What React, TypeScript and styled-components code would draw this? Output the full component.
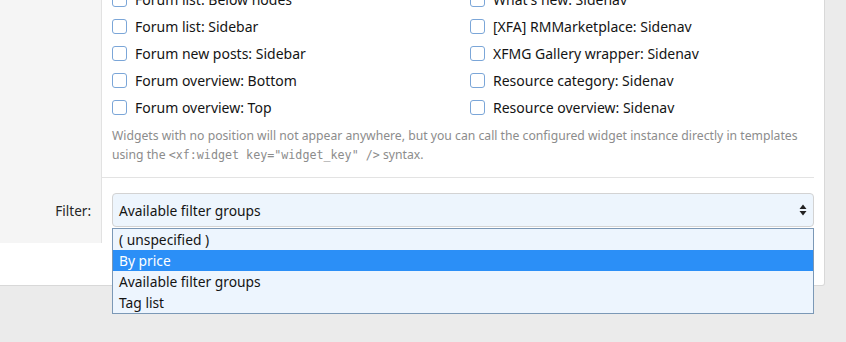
import React from 'react';
import styled, { createGlobalStyle } from 'styled-components';

const GlobalStyle = createGlobalStyle`
  html, body {
    margin: 0;
    padding: 0;
    background: #ebebeb;
    font-family: 'Segoe UI', 'Noto Sans', 'Open Sans', sans-serif;
    color: #141414;
    overflow: hidden;
  }
`;

const Page = styled.div`
  width: 846px;
  height: 342px;
  padding-right: 21px;
  box-sizing: border-box;
  overflow: hidden;
`;

const Block = styled.div`
  margin-top: -15px;
  background: #fff;
  border: 1px solid #d8d8d8;
  border-left: none;
  border-radius: 0 0 3px 0;
`;

const FormRow = styled.div`
  display: grid;
  grid-template-columns: 102px 1fr;
`;

const Label = styled.div`
  background: #f5f5f5;
  border-right: 1px solid #e2e2e2;
  display: flex;
  justify-content: flex-end;
  align-items: center;
  padding-right: 10px;
  font-size: 13.5px;
  color: #252525;
`;

const Content = styled.div<{ $pad: string }>`
  padding: ${(p) => p.$pad};
  position: relative;
`;

const CheckGrid = styled.div`
  display: grid;
  grid-template-columns: 1fr 1fr;
  column-gap: 14px;
`;

const CheckRow = styled.label`
  display: flex;
  align-items: center;
  height: 27px;
  font-size: 14px;
  white-space: nowrap;
`;

const Box = styled.span`
  width: 13px;
  height: 13px;
  border: 1px solid #7ba6d8;
  border-radius: 3px;
  background: #fff;
  margin-right: 8px;
  flex-shrink: 0;
`;

const Hint = styled.div`
  margin-top: 5px;
  font-size: 12.2px;
  line-height: 19px;
  color: #8c8c8c;
`;

const Code = styled.code`
  font-family: 'DejaVu Sans Mono', 'Liberation Mono', monospace;
  font-size: 11.7px;
`;

const Divider = styled.div`
  height: 1px;
  background: #e3e3e3;
  margin-right: 10px;
`;

const Select = styled.div`
  height: 34px;
  box-sizing: border-box;
  border: 1px solid #d3d3d3;
  border-radius: 4px;
  background: #edf5fd;
  display: flex;
  align-items: center;
  justify-content: space-between;
  padding: 0 6px 0 6px;
  font-size: 13.8px;
`;

const Dropdown = styled.ul`
  position: absolute;
  left: 10px;
  right: 10px;
  top: 50px;
  margin: 0;
  padding: 0;
  list-style: none;
  background: #edf5fe;
  border: 1px solid #7b98b6;
  z-index: 2;
`;

const Option = styled.li<{ $active?: boolean }>`
  height: 21px;
  line-height: 21px;
  padding-left: 6px;
  font-size: 13.8px;
  background: ${(p) => (p.$active ? '#2b8ff7' : 'transparent')};
  color: ${(p) => (p.$active ? '#fff' : '#141414')};
`;

const Footer = styled.div`
  height: 42px;
`;

const left = [
  'Forum list: Below nodes',
  'Forum list: Sidebar',
  'Forum new posts: Sidebar',
  'Forum overview: Bottom',
  'Forum overview: Top',
];
const right = [
  "What's new: Sidenav",
  '[XFA] RMMarketplace: Sidenav',
  'XFMG Gallery wrapper: Sidenav',
  'Resource category: Sidenav',
  'Resource overview: Sidenav',
];

const Arrows = () => (
  <svg width="8" height="12" viewBox="0 0 8 12">
    <path d="M4 0.5 L7.5 5 H0.5 Z M4 11.5 L7.5 7 H0.5 Z" fill="#222" />
  </svg>
);

const App: React.FC = () => (
  <Page>
    <GlobalStyle />
    <Block>
      <FormRow>
        <Label />
        <Content $pad="0 10px 12px 10px">
          <CheckGrid>
            {left.map((l, i) => (
              <React.Fragment key={l}>
                <CheckRow>
                  <Box />
                  {l}
                </CheckRow>
                <CheckRow>
                  <Box />
                  {right[i]}
                </CheckRow>
              </React.Fragment>
            ))}
          </CheckGrid>
          <Hint>
            Widgets with no position will not appear anywhere, but you can call the configured widget instance directly in templates
            using the <Code>&lt;xf:widget key="widget_key" /&gt;</Code> syntax.
          </Hint>
        </Content>
      </FormRow>
      <FormRow>
        <Label />
        <Divider />
      </FormRow>
      <FormRow>
        <Label>Filter:</Label>
        <Content $pad="15px 10px 16px 10px">
          <Select>
            <span>Available filter groups</span>
            <Arrows />
          </Select>
          <Dropdown>
            <Option>( unspecified )</Option>
            <Option $active>By price</Option>
            <Option>Available filter groups</Option>
            <Option>Tag list</Option>
          </Dropdown>
        </Content>
      </FormRow>
      <Footer />
    </Block>
  </Page>
);

export default App;
